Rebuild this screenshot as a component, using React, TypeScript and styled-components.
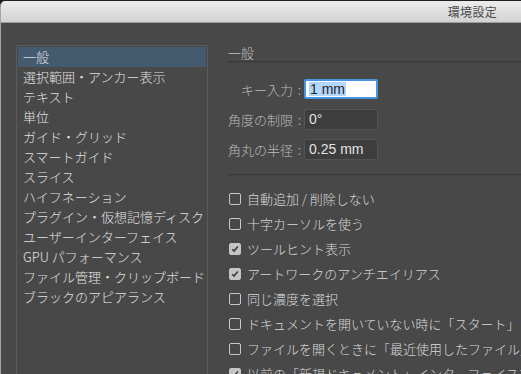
import React from 'react';
import styled, { createGlobalStyle } from 'styled-components';

const GlobalStyle = createGlobalStyle`
  html, body {
    margin: 0;
    padding: 0;
    background: #1f1f1f;
  }
  body {
    font-family: "Noto Sans CJK JP", "Noto Sans", sans-serif;
    font-weight: 300;
  }
`;

const Screen = styled.div`
  width: 521px;
  height: 374px;
  overflow: hidden;
  padding-top: 1px;
  box-sizing: border-box;
`;

const Window = styled.div`
  width: 560px;
  height: 373px;
  display: flex;
  flex-direction: column;
  background: #484848;
  border-left: 1px solid #a4a4a4;
  border-radius: 5px 0 0 0;
  overflow: hidden;
`;

const TitleBar = styled.div`
  height: 21px;
  flex: none;
  display: flex;
  align-items: center;
  justify-content: flex-end;
  padding-right: 64px;
  background: linear-gradient(#ececec, #d2d2d2);
  border-bottom: 1px solid #9c9c9c;
  color: #4b4b4b;
  font-size: 12px;
  font-weight: 400;
  letter-spacing: 0.3px;
`;

const Body = styled.div`
  flex: 1;
  display: flex;
  gap: 20px;
  padding: 22px 0 0 15px;
  min-height: 0;
`;

const CategoryList = styled.ul`
  list-style: none;
  margin: 0;
  padding: 1px;
  width: 188px;
  flex: none;
  border: 1px solid #5b5b5b;
  border-bottom: none;
`;

const CategoryItem = styled.li<{ $active?: boolean }>`
  height: 20px;
  line-height: 20px;
  padding-left: 5px;
  font-size: 13px;
  color: #e0e0e0;
  white-space: nowrap;
  background: ${p => (p.$active ? '#435a6f' : 'transparent')};
`;

const Panel = styled.div`
  flex: 1;
  display: flex;
  flex-direction: column;
  min-width: 0;
`;

const SectionTitle = styled.div`
  height: 17px;
  line-height: 17px;
  margin-top: -1px;
  font-size: 13px;
  color: #c2c2c2;
`;

const Divider = styled.div`
  height: 0;
  border-top: 1px solid #3a3a3a;
  border-bottom: 1px solid #424242;
`;

const FieldGroup = styled.div`
  display: flex;
  flex-direction: column;
  gap: 10px;
  margin: 16px 0 15px;
`;

const FieldRow = styled.div`
  display: flex;
  align-items: center;
  gap: 3px;
  height: 20px;
`;

const FieldLabel = styled.span`
  width: 73px;
  text-align: right;
  font-size: 13px;
  color: #bcbcbc;
  white-space: nowrap;
  word-spacing: 2px;
`;

const FieldInput = styled.div<{ $focused?: boolean }>`
  box-sizing: border-box;
  width: 74px;
  height: ${p => (p.$focused ? '20px' : '21px')};
  display: flex;
  align-items: center;
  padding-left: ${p => (p.$focused ? '3px' : '4px')};
  border-radius: 2px;
  font-family: "Liberation Sans", "Noto Sans", sans-serif;
  font-weight: 400;
  font-size: 14px;
  background: ${p => (p.$focused ? '#ffffff' : '#3d3d3d')};
  border: ${p => (p.$focused ? '2px solid #4a95e0' : '1px solid #545454')};
  color: ${p => (p.$focused ? '#262626' : '#e2e2e2')};
`;

const Selection = styled.span`
  background: #b3d6fd;
  padding: 0 1px;
  line-height: 14px;
`;

const CheckList = styled.div`
  display: flex;
  flex-direction: column;
  margin-top: 10px;
`;

const CheckRow = styled.label`
  display: flex;
  align-items: center;
  gap: 6px;
  height: 25px;
  font-size: 13px;
  color: #d8d8d8;
  white-space: nowrap;
`;

const Box = styled.span<{ $checked?: boolean }>`
  box-sizing: border-box;
  width: 12px;
  height: 12px;
  flex: none;
  margin-left: 1px;
  border-radius: 2px;
  display: flex;
  align-items: center;
  justify-content: center;
  border: 1px solid ${p => (p.$checked ? '#c4c4c4' : '#c8c8c8')};
  background: ${p => (p.$checked ? '#c4c4c4' : 'transparent')};
`;

const categories = [
  '一般',
  '選択範囲・アンカー表示',
  'テキスト',
  '単位',
  'ガイド・グリッド',
  'スマートガイド',
  'スライス',
  'ハイフネーション',
  'プラグイン・仮想記憶ディスク',
  'ユーザーインターフェイス',
  'GPU パフォーマンス',
  'ファイル管理・クリップボード',
  'ブラックのアピアランス',
];

const options = [
  { label: '自動追加 / 削除しない', checked: false },
  { label: '十字カーソルを使う', checked: false },
  { label: 'ツールヒント表示', checked: true },
  { label: 'アートワークのアンチエイリアス', checked: true },
  { label: '同じ濃度を選択', checked: false },
  { label: 'ドキュメントを開いていない時に「スタート」ワークスペースを表示', checked: false },
  { label: 'ファイルを開くときに「最近使用したファイル」ワークスペースを表示', checked: false },
  { label: '以前の「新規ドキュメント」インターフェイスを使用', checked: true },
];

function Check({ checked }: { checked: boolean }) {
  return (
    <Box $checked={checked}>
      {checked && (
        <svg width="8" height="8" viewBox="0 0 8 8">
          <path d="M1.2 4.2 L3.1 6.1 L6.8 1.6" fill="none" stroke="#3a3a3a" strokeWidth="1.5" />
        </svg>
      )}
    </Box>
  );
}

export default function App() {
  return (
    <Screen>
      <GlobalStyle />
      <Window>
        <TitleBar>環境設定</TitleBar>
        <Body>
          <CategoryList>
            {categories.map((c, i) => (
              <CategoryItem key={c} $active={i === 0}>
                {c}
              </CategoryItem>
            ))}
          </CategoryList>
          <Panel>
            <SectionTitle>一般</SectionTitle>
            <Divider />
            <FieldGroup>
              <FieldRow>
                <FieldLabel>キー入力 :</FieldLabel>
                <FieldInput $focused>
                  <Selection>1 mm</Selection>
                </FieldInput>
              </FieldRow>
              <FieldRow>
                <FieldLabel>角度の制限 :</FieldLabel>
                <FieldInput>0°</FieldInput>
              </FieldRow>
              <FieldRow>
                <FieldLabel>角丸の半径 :</FieldLabel>
                <FieldInput>0.25 mm</FieldInput>
              </FieldRow>
            </FieldGroup>
            <Divider />
            <CheckList>
              {options.map(o => (
                <CheckRow key={o.label}>
                  <Check checked={o.checked} />
                  {o.label}
                </CheckRow>
              ))}
            </CheckList>
          </Panel>
        </Body>
      </Window>
    </Screen>
  );
}
